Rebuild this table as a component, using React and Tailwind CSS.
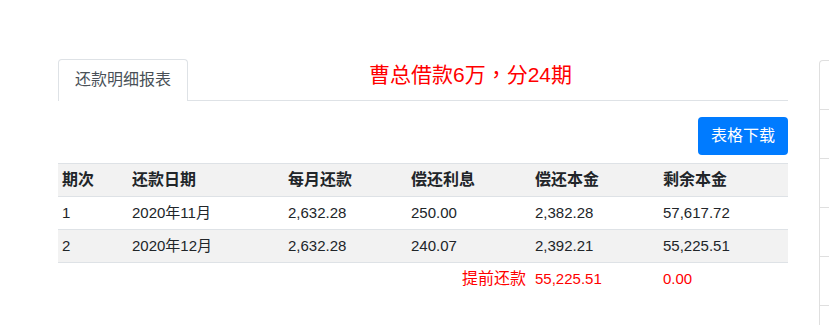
const rows = [
  { no: '1', date: '2020年11月', pay: '2,632.28', interest: '250.00', principal: '2,382.28', left: '57,617.72' },
  { no: '2', date: '2020年12月', pay: '2,632.28', interest: '240.07', principal: '2,392.21', left: '55,225.51' },
];

const heads = ['期次', '还款日期', '每月还款', '偿还利息', '偿还本金', '剩余本金'];
const widths = ['w-[70px]', 'w-[156px]', 'w-[123px]', 'w-[124px]', 'w-[128px]', 'w-[129px]'];

export default function App() {
  return (
    <div
      className="flex w-[829px] h-[325px] overflow-hidden bg-white text-[#212529]"
      style={{ fontFamily: '"Liberation Sans", "Noto Sans CJK SC", sans-serif' }}
    >
      {/* Main card */}
      <div className="ml-[58px] w-[730px] shrink-0 pt-[59px]">
        {/* Tabs + title */}
        <div className="flex items-start border-b border-[#dee2e6] h-[42px]">
          <div className="-mb-px h-[42px] w-[130px] shrink-0 whitespace-nowrap rounded-t border border-b-0 border-[#dee2e6] bg-white px-4 py-2 text-[16px] leading-6 text-[#495057]">
            还款明细报表
          </div>
          <h3 className="ml-[181px] whitespace-nowrap text-[21px] leading-7 text-[#ff0000] font-normal">
            曹总借款6万<span style={{ fontFamily: '"Noto Sans CJK TC", sans-serif' }}>，</span>分24期
          </h3>
        </div>

        {/* Download button */}
        <div className="flex justify-end mt-4 mb-2">
          <button className="h-[38px] w-[90px] rounded bg-[#007bff] text-[16px] leading-6 text-white">
            表格下载
          </button>
        </div>

        {/* Table */}
        <table className="w-[730px] border-collapse table-fixed">
          <thead>
            <tr className="h-[33px] bg-[#f2f2f2] border-y border-[#dee2e6]">
              {heads.map((h, i) => (
                <th key={h} className={`${widths[i]} px-1 text-left text-[16px] font-bold`}>
                  {h}
                </th>
              ))}
            </tr>
          </thead>
          <tbody className="text-[15px]">
            {rows.map((r, i) => (
              <tr key={r.no} className={`h-[33px] border-b border-[#dee2e6] ${i % 2 ? 'bg-[#f2f2f2]' : 'bg-white'}`}>
                <td className="px-1">{r.no}</td>
                <td className="px-1">{r.date}</td>
                <td className="px-1">{r.pay}</td>
                <td className="px-1">{r.interest}</td>
                <td className="px-1">{r.principal}</td>
                <td className="px-1">{r.left}</td>
              </tr>
            ))}
            <tr className="h-[33px] text-[#ff0000]">
              <td colSpan={4} className="pr-[5px] text-right text-[16px]">提前还款</td>
              <td className="px-1">55,225.51</td>
              <td className="px-1">0.00</td>
            </tr>
          </tbody>
        </table>
      </div>

      {/* Side list, cut off by the window edge */}
      <div className="ml-[31px] mt-[60px] w-[300px] shrink-0 rounded-tl border-l border-t border-[#dfdfdf]">
        {[0, 1, 2, 3, 4, 5].map((i) => (
          <div key={i} className="h-[49px] border-b border-[#dfdfdf]" />
        ))}
      </div>
    </div>
  );
}
